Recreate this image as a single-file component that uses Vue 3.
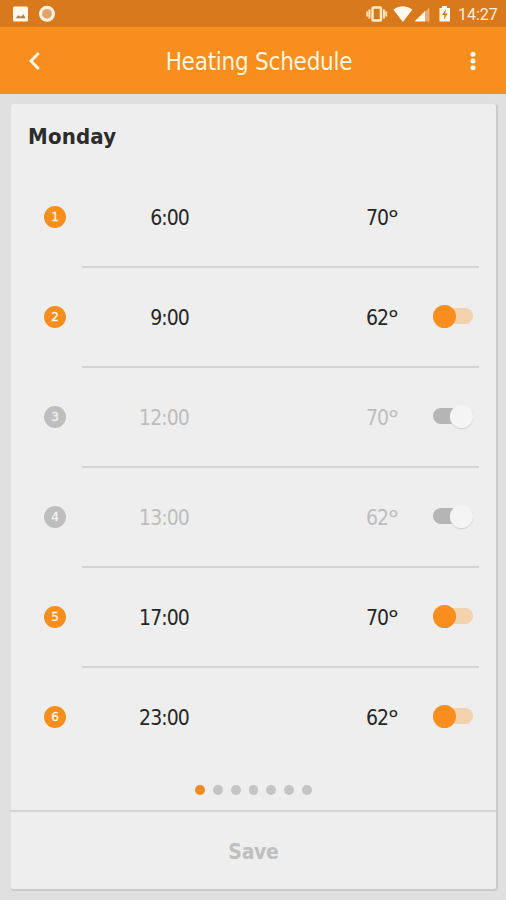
<script setup>
const slots = [
  { time: '6:00', temp: 70, active: true, toggle: false },
  { time: '9:00', temp: 62, active: true, toggle: true },
  { time: '12:00', temp: 70, active: false, toggle: true },
  { time: '13:00', temp: 62, active: false, toggle: true },
  { time: '17:00', temp: 70, active: true, toggle: true },
  { time: '23:00', temp: 62, active: true, toggle: true },
]
</script>

<template>
  <div class="screen">
    <div class="status">
      <svg class="status-left" width="60" height="27" viewBox="0 0 60 27">
        <rect x="13" y="6.500" width="15" height="15" rx="1.500" fill="#fff9ee" />
        <path d="M15.500 18.200l3-3 2.500 1.500 2.500-2.500 2 4z" fill="#c27a33" />
        <circle cx="47" cy="13.800" r="8" fill="#fff3e3" />
        <circle cx="47" cy="13.800" r="4.900" fill="#dfa46b" />
      </svg>
      <svg class="status-right" width="90" height="27" viewBox="363 0 90 27">
        <rect x="372.500" y="7.500" width="8.500" height="13" rx="1" fill="none" stroke="#ffeccb" stroke-width="2.400" />
        <path d="M369.500 9.500v9M384 9.500v9M367.300 11.500v5M386.200 11.500v5" stroke="#ffe3b8" stroke-width="2" />
        <path d="M393.300 9.500Q402.600 3 412.400 9.500L402.900 22z" fill="#fff9ee" />
        <path d="M429.500 7.500V21.500H424V12.700z" fill="#e9ad72" />
        <path d="M425 11V21.500H414.500z" fill="#fff9ee" />
        <path d="M442 6h5v2h3v13.500h-10.500V8h2.500z" fill="#fff9ee" />
        <path d="M446 9l-4 6h2.500l-.8 4.800 4-6.300h-2.500z" fill="#d87a1b" />
      </svg>
      <span class="clock">14:27</span>
    </div>
    <header class="bar">
      <svg class="back" width="24" height="24" viewBox="0 0 24 24">
        <path d="M17.800 4l-7.800 8 7.800 8" fill="none" stroke="#fff8e8" stroke-width="2.900" />
      </svg>
      <h1>Heating Schedule</h1>
      <svg class="more" width="8" height="24" viewBox="0 0 8 24">
        <circle cx="4" cy="5.200" r="2.500" /><circle cx="4" cy="12" r="2.500" /><circle cx="4" cy="18.700" r="2.500" />
      </svg>
    </header>
    <main class="card">
      <h2>Monday</h2>
      <ul class="slots">
        <li v-for="(slot, i) in slots" :key="i" class="slot" :class="{ off: !slot.active }">
          <span class="badge">{{ i + 1 }}</span>
          <div class="detail">
            <span class="time">{{ slot.time }}</span>
            <span class="temp">{{ slot.temp }}<span class="degree">°</span></span>
            <span v-if="slot.toggle" class="switch"><span class="thumb"></span></span>
          </div>
        </li>
      </ul>
      <div class="pager">
        <span v-for="n in 7" :key="n" class="dot" :class="{ current: n === 1 }"></span>
      </div>
      <button class="save">Save</button>
    </main>
  </div>
</template>

<style>
body {
  margin: 0;
  background: #e0e0e0;
}
</style>

<style scoped>
.screen {
  box-sizing: border-box;
  width: 506px;
  height: 900px;
  display: flex;
  flex-direction: column;
  background: #e0e0e0;
  font-family: "DejaVu Sans Condensed", "DejaVu Sans", sans-serif;
  font-stretch: condensed;
  overflow: hidden;
}
.status {
  flex: none;
  height: 27px;
  display: flex;
  align-items: center;
  background: #d87a1b;
}
.status-right {
  margin-left: auto;
}
.clock {
  width: 39px;
  margin: 1px 9px 0 5px;
  font: 16px/27px Roboto, sans-serif;
  color: #ffefd9;
  white-space: nowrap;
}
.bar {
  flex: none;
  box-sizing: border-box;
  height: 67px;
  padding: 0 29px 0 21px;
  display: flex;
  align-items: center;
  background: #f78e1e;
}
.bar h1 {
  flex: 1;
  margin: 3px 0 0 4px;
  text-align: center;
  font-size: 24px;
  line-height: 32px;
  font-weight: 400;
  letter-spacing: -0.25px;
  color: #fff4df;
}
.more {
  fill: #fff8e8;
}
.card {
  flex: none;
  box-sizing: border-box;
  width: 485px;
  height: 785px;
  margin: 10px 0 0 11px;
  display: flex;
  flex-direction: column;
  background: #eee;
  border-radius: 2px;
  box-shadow: 1px 1px 1px 1px #cacaca;
}
h2 {
  margin: 16px 0 0 17px;
  height: 48px;
  font-size: 22px;
  line-height: 34px;
  font-weight: 700;
  letter-spacing: 0.2px;
  color: #2c2c2c;
}
.slots {
  margin: 0;
  padding: 0;
  list-style: none;
}
.slot {
  height: 100px;
  padding: 0 17px 0 33px;
  display: flex;
  align-items: center;
}
.badge {
  width: 22px;
  height: 22px;
  margin-bottom: 2px;
  border-radius: 50%;
  background: #f78e1e;
  color: #fff8ea;
  font-family: "DejaVu Sans", sans-serif;
  font-stretch: normal;
  font-size: 12px;
  line-height: 23px;
  text-align: center;
  -webkit-text-stroke: 0.3px currentColor;
}
.detail {
  flex: 1;
  box-sizing: border-box;
  height: 100%;
  margin-left: 16px;
  padding-top: 1px;
  display: flex;
  align-items: center;
  border-bottom: 2px solid #d4d4d4;
  font-size: 21px;
  line-height: 30px;
  letter-spacing: -0.9px;
  color: #262626;
}
.slot:last-child .detail {
  border-bottom-color: transparent;
}
.time {
  width: 107px;
  text-align: right;
}
.temp {
  width: 36px;
  margin-left: 177px;
  white-space: nowrap;
}
.degree {
  font-family: "Noto Sans", sans-serif;
  font-size: 24px;
  line-height: 0;
  vertical-align: -2px;
}
.switch {
  width: 40px;
  height: 16px;
  margin: -3px 0 0 31px;
  display: flex;
  align-items: center;
  border-radius: 8px;
  background: #f3d2ae;
}
.thumb {
  width: 23px;
  height: 23px;
  border-radius: 50%;
  background: #f78e1e;
}
.off .badge {
  background: #bebebe;
  color: #f2f2f2;
}
.off .detail {
  color: #bdbdbd;
}
.off .switch {
  justify-content: flex-end;
  background: #b5b5b5;
}
.off .thumb {
  background: #f4f4f4;
  box-shadow: 0 1px 1px #d0d0d0;
}
.pager {
  flex: 1;
  padding-top: 17px;
  display: flex;
  justify-content: center;
  gap: 8px;
}
.dot {
  width: 9.8px;
  height: 9.8px;
  border-radius: 50%;
  background: #c4c4c4;
}
.dot.current {
  background: #ee8c1f;
}
.save {
  flex: none;
  box-sizing: border-box;
  height: 79px;
  padding: 3px 0 0;
  border: 0;
  border-top: 2px solid #d4d4d4;
  background: transparent;
  font: inherit;
  font-size: 21px;
  font-weight: 700;
  letter-spacing: -0.3px;
  color: #bfbfbf;
}
</style>
